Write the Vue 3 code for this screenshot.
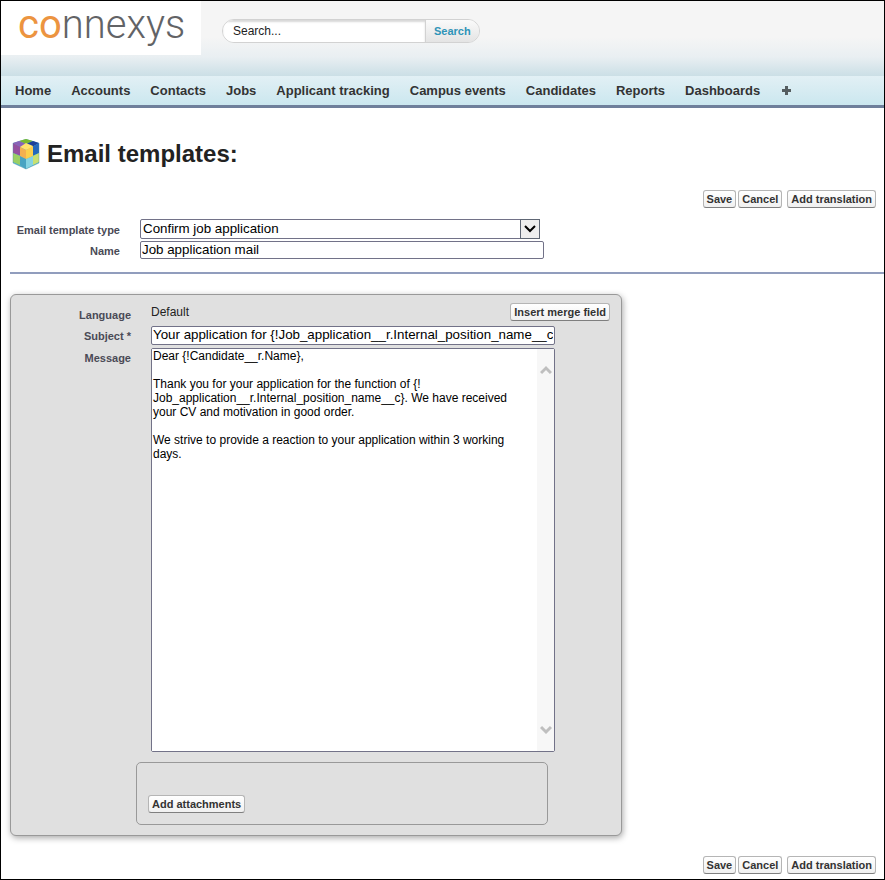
<script setup>
import { reactive, ref } from 'vue';

const tabs = [
  'Home',
  'Accounts',
  'Contacts',
  'Jobs',
  'Applicant tracking',
  'Campus events',
  'Candidates',
  'Reports',
  'Dashboards',
];

const templateTypes = ['Confirm job application', 'Reject candidate', 'Invite candidate'];

const searchText = ref('Search...');

const form = reactive({
  type: 'Confirm job application',
  name: 'Job application mail',
  subject: 'Your application for {!Job_application__r.Internal_position_name__c}',
  message: `Dear {!Candidate__r.Name},

Thank you for your application for the function of {!
Job_application__r.Internal_position_name__c}. We have received your CV and motivation in good order.

We strive to provide a reaction to your application within 3 working days.`,
});

const messageBox = ref(null);

function scrollMessage(step) {
  messageBox.value.scrollTop += step;
}
</script>

<template>
  <div class="page">
    <header class="header">
      <a href="#" class="logo"><span class="logo-co">co</span><span>nnexys</span></a>
      <form class="search" @submit.prevent>
        <input v-model="searchText" type="text" aria-label="Search" />
        <button type="submit">Search</button>
      </form>
    </header>

    <nav class="tabs">
      <a v-for="tab in tabs" :key="tab" href="#">{{ tab }}</a>
      <a href="#" class="tab-more" aria-label="All tabs">
        <svg width="9" height="9" viewBox="0 0 9 9">
          <path d="M3 0h3v3h3v3H6v3H3V6H0V3h3z" fill="#555d60" />
        </svg>
      </a>
    </nav>

    <main>
      <div class="title">
        <svg width="28" height="32" viewBox="0 0 28 32">
          <path d="M14 1 27 5v20L14 31 1 25V5z" fill="#53b5cf" />
          <path d="M14 1l7 2-7 3-7-3z" fill="#79b82f" />
          <path d="M7 3l7 3-5 3-8-4z" fill="#8a62b8" />
          <path d="M21 3l6 2-7 4-6-3z" fill="#1c4299" />
          <path d="M1 5l8 4v9l-8-3z" fill="#94509f" />
          <path d="M1 15l7 3v9l-7-3z" fill="#9ccf63" />
          <path d="M8 18l6 3v10l-6-4z" fill="#48a3c2" />
          <path d="M27 5v10l-7 3V9z" fill="#2469ba" />
          <path d="M27 15v9l-6 3v-9z" fill="#c8e070" />
          <path d="M14 21l7-3v9l-7 4z" fill="#86d3e2" />
          <path d="M14 5l7 3-2 2-5 2-6-3z" fill="#ffe36e" />
          <path d="M8 9l6 3v9l-6-3z" fill="#f3b050" />
          <path d="M14 12l7-4v10l-7 3z" fill="#fbd04c" />
          <path d="M1 5v20l13 6 13-6V5" fill="none" stroke="#4b8ba4" stroke-opacity="0.4" />
        </svg>
        <h1>Email templates:</h1>
      </div>

      <div class="actions">
        <button type="button" class="btn">Save</button>
        <button type="button" class="btn">Cancel</button>
        <button type="button" class="btn btn-last">Add translation</button>
      </div>

      <div class="template-form">
        <label for="type">Email template type</label>
        <div class="select-box">
          <select id="type" v-model="form.type">
            <option v-for="type in templateTypes" :key="type">{{ type }}</option>
          </select>
          <span class="select-arrow">
            <svg width="12" height="8" viewBox="0 0 12 8">
              <path d="M1 1l5 5 5-5" fill="none" stroke="#000" stroke-width="2" />
            </svg>
          </span>
        </div>
        <label for="name">Name</label>
        <input id="name" v-model="form.name" type="text" class="text-input" />
      </div>

      <section class="panel">
        <div class="fields">
          <span class="field-label">Language</span>
          <div class="language">
            <span>Default</span>
            <button type="button" class="btn">Insert merge field</button>
          </div>
          <label for="subject">Subject *</label>
          <input id="subject" v-model="form.subject" type="text" class="text-input" />
          <label for="message">Message</label>
          <div class="message">
            <textarea id="message" ref="messageBox" v-model="form.message"></textarea>
            <div class="scroll">
              <button type="button" aria-label="Scroll up" @click="scrollMessage(-14)">
                <svg width="12" height="10" viewBox="0 0 12 10">
                  <path d="M1 8l5-5 5 5" fill="none" stroke="#bfbfbf" stroke-width="3" />
                </svg>
              </button>
              <button type="button" aria-label="Scroll down" @click="scrollMessage(14)">
                <svg width="12" height="10" viewBox="0 0 12 10">
                  <path d="M1 2l5 5 5-5" fill="none" stroke="#bfbfbf" stroke-width="3" />
                </svg>
              </button>
            </div>
          </div>
        </div>
        <div class="attachments">
          <button type="button" class="btn">Add attachments</button>
        </div>
      </section>

      <div class="actions">
        <button type="button" class="btn">Save</button>
        <button type="button" class="btn">Cancel</button>
        <button type="button" class="btn btn-last">Add translation</button>
      </div>
    </main>
  </div>
</template>

<style>
body {
  background: #fff;
}

*,
*::before,
*::after {
  box-sizing: border-box;
}
</style>

<style scoped>
.page {
  min-height: 100vh;
  border: 1px solid #000;
  font-family: 'Liberation Sans', Arial, sans-serif;
  font-size: 12px;
  color: #222;
}

button,
input,
select,
textarea {
  margin: 0;
  font-family: inherit;
}

.header {
  display: flex;
  align-items: flex-start;
  height: 75px;
  background: linear-gradient(#f5f5f5 0, #f5f5f5 36px, #e9eff2 56px, #cbdfe6 100%);
}

.logo {
  display: flex;
  width: 200px;
  height: 54px;
  padding-left: 17px;
  background: #fff;
  color: #626366;
  font-family: Roboto, sans-serif;
  font-size: 40px;
  font-weight: 300;
  line-height: 47px;
  text-decoration: none;
}

.logo-co {
  color: #ec9440;
  font-weight: 400;
}

.search {
  display: flex;
  height: 24px;
  margin: 18px 0 0 21px;
  border: 1px solid #d2d2d2;
  border-radius: 12px;
  overflow: hidden;
}

.search input {
  width: 202px;
  padding: 0 10px;
  border: 0;
  background: #fff;
  box-shadow: inset 0 2px 2px #d8d8d8;
  color: #222;
  font-size: 12px;
}

.search button {
  padding: 0 8px;
  border: 0;
  border-left: 1px solid #d2d2d2;
  background: linear-gradient(#fafafa, #e4e4e4);
  color: #2f94b8;
  font-size: 11px;
  font-weight: bold;
}

.tabs {
  display: flex;
  align-items: center;
  gap: 20px;
  height: 32px;
  padding: 0 14px;
  border-bottom: 3px solid #6f7f9b;
  background: linear-gradient(#e2f0f5, #cbe7ef);
}

.tabs a {
  color: #333;
  font-size: 13px;
  font-weight: bold;
  text-decoration: none;
  white-space: nowrap;
}

.tabs .tab-more {
  display: flex;
  margin-left: 2px;
}

main {
  padding: 30px 8px 5px 9px;
}

.title {
  display: flex;
  align-items: center;
  gap: 7px;
  height: 32px;
  padding-left: 2px;
}

h1 {
  margin: 0;
  font-size: 24px;
  line-height: 32px;
}

.actions {
  display: flex;
  justify-content: flex-end;
  gap: 2px;
  margin-top: 20px;
}

.btn {
  height: 18px;
  padding: 0 3px;
  border: 1px solid #b5b5b5;
  border-bottom-color: #7f7f7f;
  border-radius: 3px;
  background: linear-gradient(#fff, #f0f0f0);
  color: #333;
  font-size: 11px;
  font-weight: bold;
  line-height: 14px;
  white-space: nowrap;
}

.btn-last {
  margin-left: 3px;
}

label,
.field-label {
  color: #4a4a56;
  font-size: 11px;
  font-weight: bold;
  line-height: 14px;
  text-align: right;
}

.template-form {
  display: grid;
  grid-template-columns: 110px minmax(0, 404px);
  column-gap: 20px;
  row-gap: 2px;
  align-items: center;
  margin: 11px -8px 0 0;
  padding-bottom: 13px;
  border-bottom: 2px solid #919dbd;
}

.template-form label {
  padding-top: 2px;
}

.select-box {
  position: relative;
  height: 20px;
  margin-right: 4px;
}

.select-box select {
  width: 100%;
  height: 20px;
  padding: 0 20px 2px 2px;
  border: 1px solid #727288;
  border-radius: 2px;
  appearance: none;
  background: #fff;
  color: #000;
}

.select-arrow {
  position: absolute;
  top: 0;
  right: 0;
  display: flex;
  align-items: center;
  justify-content: center;
  width: 20px;
  height: 20px;
  border: 1px solid #5e6674;
  background: #eee;
  pointer-events: none;
}

.text-input {
  width: 100%;
  height: 18px;
  padding: 0 1px 2px;
  border: 1px solid #727288;
  border-radius: 2px;
  background: #fff;
  color: #000;
}

.panel {
  max-width: 612px;
  margin-top: 20px;
  padding: 8px 11px 10px;
  border: 1px solid #999;
  border-radius: 6px;
  background: #e0e0e0;
  box-shadow: 1px 2px 6px #aaa;
}

.fields {
  display: grid;
  grid-template-columns: 109px minmax(0, 1fr);
  column-gap: 20px;
  row-gap: 3px;
}

.fields label {
  padding-top: 3px;
}

.field-label {
  padding-top: 5px;
}

.fields .text-input,
.message {
  max-width: 404px;
}

.fields .text-input {
  height: 19px;
}

.language {
  display: flex;
  justify-content: space-between;
  height: 20px;
  line-height: 18px;
}

.message {
  display: flex;
  height: 404px;
  border: 1px solid #727288;
  border-radius: 2px;
  background: #fff;
}

.message textarea {
  flex: 1;
  min-width: 0;
  padding: 0 16px 0 1px;
  border: 0;
  background: #fff;
  color: #000;
  font-size: 12px;
  line-height: 14px;
  resize: none;
  overflow: hidden;
}

.scroll {
  display: flex;
  flex-direction: column;
  justify-content: space-between;
  width: 17px;
  padding: 16px 0;
  background: #f7f7f7;
}

.scroll button {
  display: flex;
  justify-content: center;
  padding: 0;
  border: 0;
  background: none;
}

.attachments {
  display: flex;
  align-items: flex-end;
  max-width: 412px;
  height: 63px;
  margin: 10px 0 0 114px;
  padding: 11px;
  border: 1px solid #999;
  border-radius: 5px;
}
</style>
